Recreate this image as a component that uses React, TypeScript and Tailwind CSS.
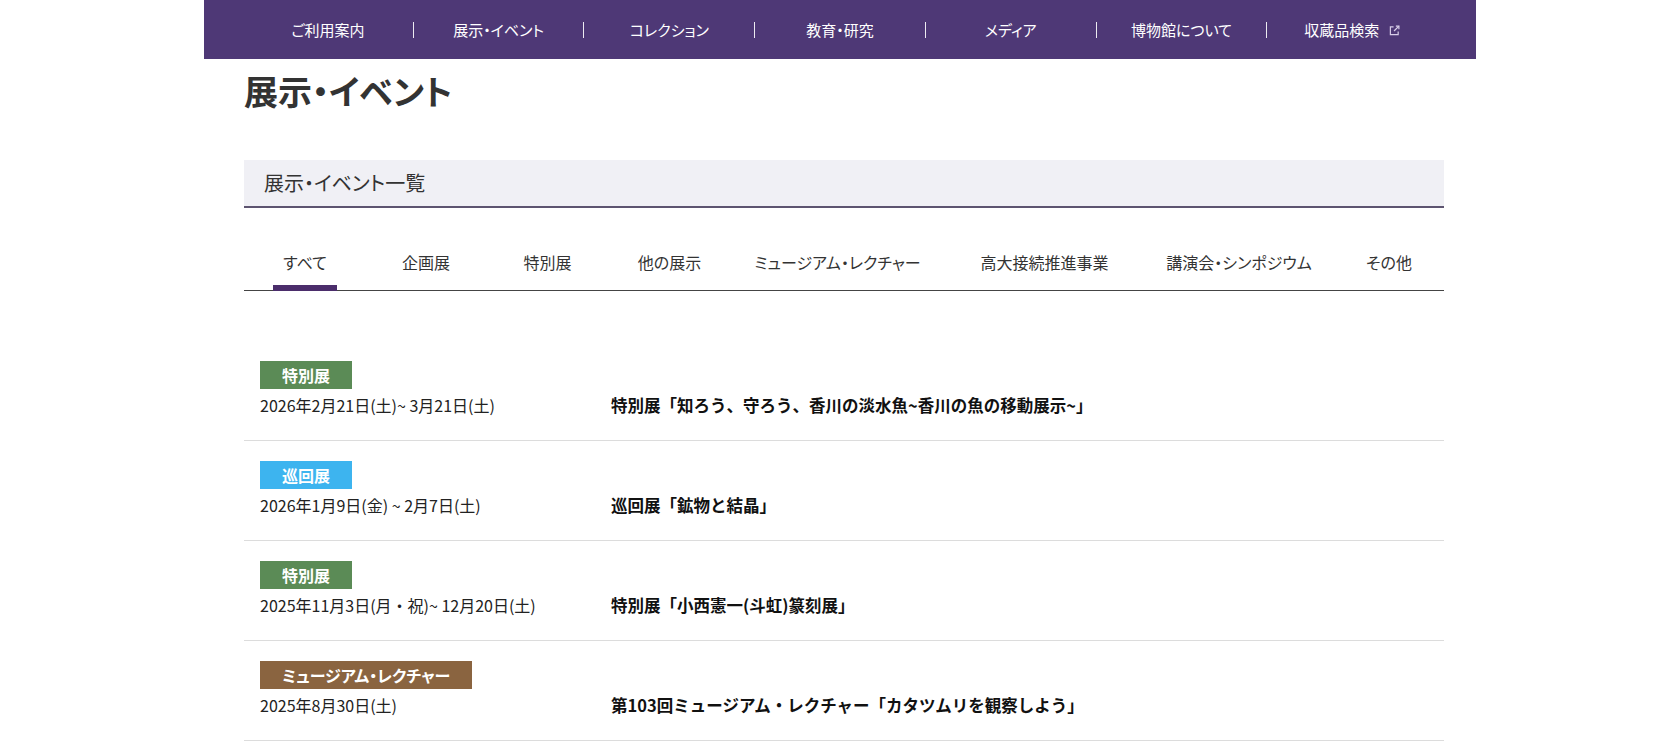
import React from "react";

const navItems = ["ご利用案内", "展示・イベント", "コレクション", "教育・研究", "メディア", "博物館について", "収蔵品検索"];

const tabs = [
  { label: "すべて", w: "w-[122px]", active: true },
  { label: "企画展", w: "w-[120px]" },
  { label: "特別展", w: "w-[123px]" },
  { label: "他の展示", w: "w-[121px]" },
  { label: "ミュージアム・レクチャー", w: "w-[215px]" },
  { label: "高大接続推進事業", w: "w-[199px]" },
  { label: "講演会・シンポジウム", w: "w-[190px]" },
  { label: "その他", w: "flex-1" },
];

const rows = [
  {
    badge: "特別展",
    color: "bg-[#5b8b56]",
    date: "2026年2月21日(土)~ 3月21日(土)",
    title: "特別展「知ろう、守ろう、香川の淡水魚~香川の魚の移動展示~」",
  },
  {
    badge: "巡回展",
    color: "bg-[#3db4ef]",
    date: "2026年1月9日(金) ~ 2月7日(土)",
    title: "巡回展「鉱物と結晶」",
  },
  {
    badge: "特別展",
    color: "bg-[#5b8b56]",
    date: "2025年11月3日(月・祝)~ 12月20日(土)",
    title: "特別展「小西憲一(斗虹)篆刻展」",
  },
  {
    badge: "ミュージアム・レクチャー",
    color: "bg-[#8a6440]",
    date: "2025年8月30日(土)",
    title: "第103回ミュージアム・レクチャー「カタツムリを観察しよう」",
  },
];

function ExternalIcon() {
  return (
    <svg width="11" height="11" viewBox="0 0 12 12" fill="none" stroke="#d9cfe9" strokeWidth="1.3" className="ml-[10px] mt-[2px]">
      <path d="M5 2H1.5v8.5H10V7" />
      <path d="M7.5 1.2h3.3v3.3" />
      <path d="M10.8 1.2L5.5 6.5" />
    </svg>
  );
}

export default function App() {
  return (
    <div className="min-h-screen bg-white text-[#333] [font-family:'Noto_Sans_CJK_JP','Noto_Sans',sans-serif]">
      <div className="w-[1272px] mx-auto">
        <nav className="bg-[#4e3876] h-[59px]">
          <ul className="w-[1194px] mx-auto h-full flex items-center [font-feature-settings:'palt']">
            {navItems.map((item, i) => (
              <React.Fragment key={item}>
                {i > 0 && <li className="w-px h-[16px] bg-white/90" aria-hidden />}
                <li className="flex-1 flex items-center justify-center text-[15px] text-white leading-6">
                  <span>{item}</span>
                  {i === navItems.length - 1 && <ExternalIcon />}
                </li>
              </React.Fragment>
            ))}
          </ul>
        </nav>

        <main className="ml-[40px] w-[1200px]">
          <h1 className="mt-[5px] text-[34px] leading-[54px] font-bold text-[#333] [font-feature-settings:'palt']">
            展示・イベント
          </h1>

          <h2 className="mt-[42px] h-[48px] bg-[#f0f0f5] border-b-2 border-[#5d5470] pl-[20px] text-[20px] leading-[46px] font-normal text-[#333] [font-feature-settings:'palt']">
            展示・イベント一覧
          </h2>

          <ul className="mt-[42px] flex border-b border-[#444] [font-feature-settings:'palt']">
            {tabs.map((t) => (
              <li key={t.label} className={`${t.w} flex flex-col items-center`}>
                <span className="text-[16px] leading-6 text-[#333] whitespace-nowrap">{t.label}</span>
                <span className={`mt-[11px] mb-[-1px] h-[6px] w-[64px] ${t.active ? "bg-[#4b2d6b]" : "bg-transparent"}`} />
              </li>
            ))}
          </ul>

          <ul className="mt-[50px]">
            {rows.map((r, i) => (
              <li key={i} className="flex items-end pl-[16px] pt-[20px] pb-[23px] border-b border-[#dcdcdc]">
                <div className="w-[351px] flex flex-col items-start">
                  <span className={`${r.color} text-white font-bold text-[16px] leading-[28px] h-[28px] px-[22px] [font-feature-settings:'palt']`}>
                    {r.badge}
                  </span>
                  <span className="mt-[4px] text-[16px] leading-6 text-[#222]">{r.date}</span>
                </div>
                <div className="text-[16.5px] leading-6 font-bold text-[#111]">{r.title}</div>
              </li>
            ))}
          </ul>
        </main>
      </div>
    </div>
  );
}
